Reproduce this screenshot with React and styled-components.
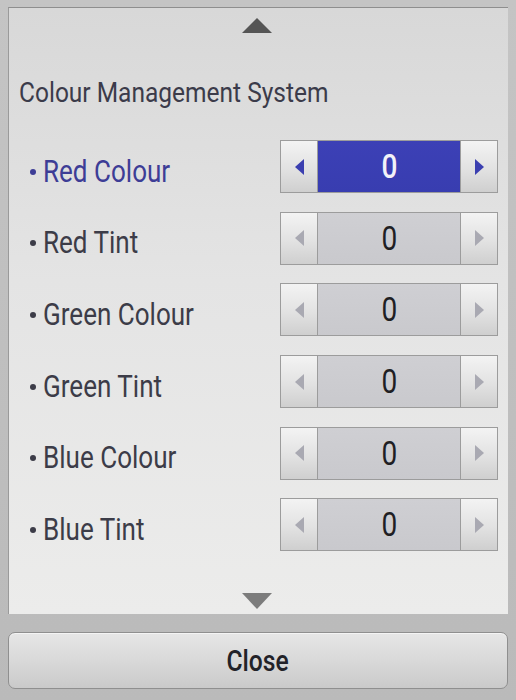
import styled, { createGlobalStyle } from "styled-components";

const GlobalStyle = createGlobalStyle`
  html, body {
    margin: 0;
    padding: 0;
    background: #bcbcbc;
  }
  body {
    font-family: Roboto, "Liberation Sans", sans-serif;
  }
`;

const Screen = styled.div`
  width: 516px;
  height: 700px;
  box-sizing: border-box;
  padding: 7px 8px 0 8px;
  background: linear-gradient(to bottom, #c4c4c4, #bababa);
  display: flex;
  flex-direction: column;
`;

const Panel = styled.div`
  height: 607px;
  box-sizing: border-box;
  border-top: 1px solid #8e8e8e;
  border-left: 1px solid #9a9a9a;
  background: linear-gradient(to bottom, #d8d8d8 0%, #e4e4e4 45%, #ececeb 100%);
  display: flex;
  flex-direction: column;
  padding: 10px 0 0 0;
`;

const ScrollArrow = styled.div`
  align-self: center;
  width: 0;
  height: 0;
  margin-left: -4px;
  border-left: 15px solid transparent;
  border-right: 15px solid transparent;
  ${(p) =>
    p.$down
      ? `border-top: 16px solid #7c7c7c; margin-top: 32px;`
      : `border-bottom: 15px solid #555; `}
`;

// the TV font is a narrow one; squeeze Roboto to match
const Narrow = styled.span`
  display: inline-block;
  transform: scaleX(${(p) => p.$x || 0.86});
  transform-origin: ${(p) => (p.$center ? "center" : "left")} center;
  white-space: nowrap;
`;

const Heading = styled.h1`
  margin: 40px 0 0 10px;
  height: 40px;
  line-height: 40px;
  font-size: 28px;
  font-weight: 400;
  color: #3b3b4a;
`;

const List = styled.div`
  margin-top: 18px;
  display: grid;
  grid-auto-rows: 71.6px;
`;

const Row = styled.div`
  display: flex;
  align-items: center;
  justify-content: space-between;
  padding: 0 10px 0 21px;
`;

const Label = styled.div`
  display: flex;
  align-items: center;
  gap: 7px;
  font-size: 31px;
  line-height: 36px;
  padding-top: 10px;
  color: ${(p) => (p.$active ? "#3d3d96" : "#3c3c48")};
  &::before {
    content: "";
    flex: none;
    width: 6px;
    height: 6px;
    border-radius: 50%;
    background: currentColor;
    margin-top: 0;
  }
`;

const Stepper = styled.div`
  display: flex;
  height: 53px;
  width: 218px;
  box-sizing: border-box;
  border: 1px solid #9c9c9c;
  background: #9c9c9c;
  gap: 1px;
`;

const ArrowButton = styled.div`
  width: 36px;
  display: flex;
  align-items: center;
  justify-content: center;
  background: linear-gradient(to bottom, #f3f3f3 0%, #e2e2e2 55%, #cfcfcf 100%);
`;

const Tri = styled.div`
  width: 0;
  height: 0;
  border-top: 8px solid transparent;
  border-bottom: 8px solid transparent;
  ${(p) =>
    p.$right
      ? `border-left: 9px solid ${p.$active ? "#3b3fb0" : "#a9a9b2"};`
      : `border-right: 9px solid ${p.$active ? "#3b3fb0" : "#a9a9b2"};`}
`;

const Value = styled.div`
  flex: 1;
  display: flex;
  align-items: center;
  justify-content: center;
  font-size: 33px;
  font-weight: ${(p) => (p.$active ? 500 : 400)};
  color: ${(p) => (p.$active ? "#f2f2f8" : "#1f1f24")};
  background: ${(p) =>
    p.$active
      ? "linear-gradient(to bottom, #3c40b6, #383db0)"
      : "linear-gradient(to bottom, #cfcfd3, #c9c9cd)"};
`;

const CloseButton = styled.button`
  margin-top: 18px;
  height: 57px;
  width: 100%;
  box-sizing: border-box;
  border: 1px solid #8f8f8f;
  border-radius: 7px;
  background: linear-gradient(to bottom, #e6e6e6 0%, #d9d9d9 50%, #cacaca 100%);
  box-shadow: inset 0 1px 0 #f4f4f4;
  font-family: Roboto, "Liberation Sans", sans-serif;
  font-size: 29px;
  font-weight: 500;
  color: #222228;
  padding: 0;
`;

const items = [
  "Red Colour",
  "Red Tint",
  "Green Colour",
  "Green Tint",
  "Blue Colour",
  "Blue Tint",
];

function SettingRow({ label, value, active }) {
  return (
    <Row>
      <Label $active={active}>
        <Narrow $x={0.84}>{label}</Narrow>
      </Label>
      <Stepper>
        <ArrowButton>
          <Tri $active={active} />
        </ArrowButton>
        <Value $active={active}>
          <Narrow $x={0.85} $center>
            {value}
          </Narrow>
        </Value>
        <ArrowButton>
          <Tri $right $active={active} />
        </ArrowButton>
      </Stepper>
    </Row>
  );
}

export default function App() {
  return (
    <>
      <GlobalStyle />
      <Screen>
        <Panel>
          <ScrollArrow />
          <Heading>
            <Narrow $x={0.875}>Colour Management System</Narrow>
          </Heading>
          <List>
            {items.map((label, i) => (
              <SettingRow key={label} label={label} value={0} active={i === 0} />
            ))}
          </List>
          <ScrollArrow $down />
        </Panel>
        <CloseButton>
          <Narrow $x={0.85} $center>
            Close
          </Narrow>
        </CloseButton>
      </Screen>
    </>
  );
}
